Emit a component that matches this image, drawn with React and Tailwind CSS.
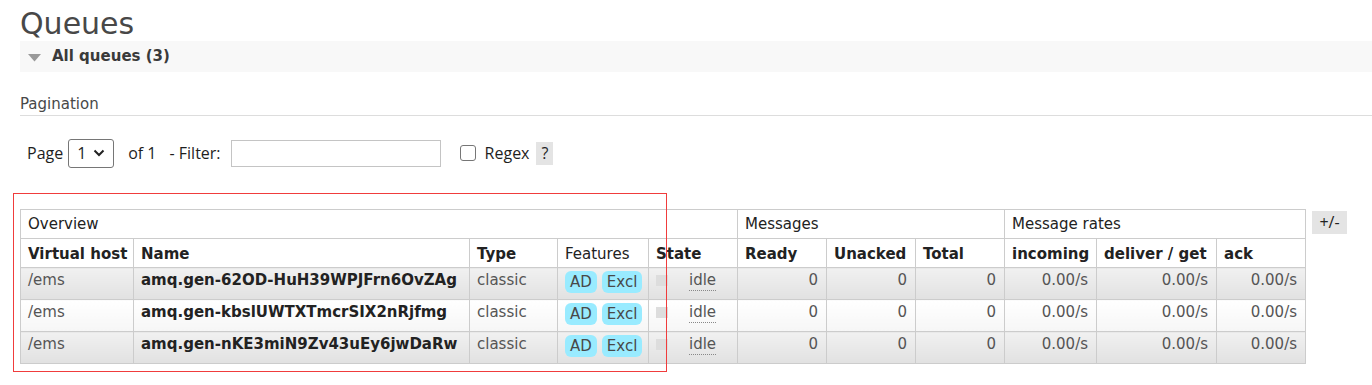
const rows = [
  { vhost: '/ems', name: 'amq.gen-62OD-HuH39WPJFrn6OvZAg' },
  { vhost: '/ems', name: 'amq.gen-kbslUWTXTmcrSIX2nRjfmg' },
  { vhost: '/ems', name: 'amq.gen-nKE3miN9Zv43uEy6jwDaRw' },
];

const widths = [113, 336, 88, 91, 89, 89, 89, 89, 92, 120, 89];

function Badge({ children }) {
  return (
    <span className="inline-block rounded-[6px] bg-[#99ebff] px-[5px] py-[1.5px] leading-[19px] text-[#484848]">
      {children}
    </span>
  );
}

export default function App() {
  const th = 'whitespace-nowrap border border-[#cccccc] px-[7px] pt-[6px] align-top text-left font-bold text-[#222]';
  const grp = 'whitespace-nowrap border border-[#cccccc] px-[7px] pt-[5px] align-top text-left font-normal text-[#222]';

  return (
    <div className="min-h-[385px] bg-white pl-[20px] font-['DejaVu_Sans',sans-serif] text-[15px] leading-[19px] text-[#484848]">
      {/* Title */}
      <h1 className="h-[41px] pt-[7px] text-[30px] leading-[34px] font-normal text-[#484848]">Queues</h1>

      {/* Section header */}
      <div className="flex h-[31px] items-center bg-[#f8f8f8] pl-[8px]">
        <svg width="13" height="8" viewBox="0 0 13 8" className="mt-[2px]">
          <path d="M0 0 L13 0 L6.5 7.5 Z" fill="#9a9a9a" />
        </svg>
        <span className="ml-[11px] text-[15px] font-bold text-[#3a3a3a]">All queues (3)</span>
      </div>

      {/* Pagination */}
      <div className="mt-[23px] border-b border-[#dddddd] pb-[1px] text-[#484848]">Pagination</div>

      <div className="mt-[22px] flex h-[30px] items-center pl-[7px] font-['Open_Sans',sans-serif] text-[16px] text-[#1e1e1e]">
        <span>Page</span>
        <div className="ml-[5px] flex h-[29px] w-[46px] items-center justify-between rounded-[3px] border border-[#767676] bg-white pl-[8px] pr-[8px]">
          <span>1</span>
          <svg width="12" height="8" viewBox="0 0 12 8">
            <path d="M1.5 1.5 L6 6 L10.5 1.5" fill="none" stroke="#222" strokeWidth="2" />
          </svg>
        </div>
        <span className="ml-[14px]">of 1</span>
        <span className="ml-[13px]">- Filter:</span>
        <div className="ml-[10px] h-[27px] w-[210px] border border-[#c4c4c4] bg-white" />
        <div className="ml-[19px] h-[16px] w-[16px] rounded-[3px] border border-[#767676] bg-white" />
        <span className="ml-[9px]">Regex</span>
        <span className="ml-[7px] flex h-[23px] w-[17px] items-center justify-center bg-[#e4e4e4]">?</span>
      </div>

      {/* Table */}
      <div className="mt-[41px] flex items-start">
        <div className="relative">
          <table className="table-fixed border-collapse" style={{ width: 1285 }}>
            <colgroup>
              {widths.map((w, i) => (
                <col key={i} style={{ width: w }} />
              ))}
            </colgroup>
            <thead>
              <tr className="h-[29px]">
                <th colSpan={5} className={grp}>Overview</th>
                <th colSpan={3} className={grp}>Messages</th>
                <th colSpan={3} className={grp}>Message rates</th>
              </tr>
              <tr className="h-[29px]">
                <th className={th}>Virtual host</th>
                <th className={th}>Name</th>
                <th className={th}>Type</th>
                <th className={th + ' !font-normal'}>Features</th>
                <th className={th}>State</th>
                <th className={th}>Ready</th>
                <th className={th}>Unacked</th>
                <th className={th}>Total</th>
                <th className={th}>incoming</th>
                <th className={th}>deliver / get</th>
                <th className={th}>ack</th>
              </tr>
            </thead>
            <tbody>
              {rows.map((r, i) => {
                const bg = i % 2 === 0
                  ? 'bg-linear-to-b from-[#f1f1f1] to-[#e1e1e1]'
                  : 'bg-linear-to-b from-[#ffffff] to-[#f6f6f6]';
                const td = `whitespace-nowrap border border-[#cccccc] px-[7px] pt-[3px] align-top text-[#555] ${bg}`;
                const num = `${td} text-right !pr-[8px]`;
                return (
                  <tr key={i} className="h-[32px]">
                    <td className={td}>{r.vhost}</td>
                    <td className={`${td} font-bold !text-[#222]`}>{r.name}</td>
                    <td className={td}>classic</td>
                    <td className={td}>
                      <div className="flex gap-[5px]">
                        <Badge>AD</Badge>
                        <Badge>Excl</Badge>
                      </div>
                    </td>
                    <td className={td}>
                      <div className="flex items-start">
                        <span className="mt-[4px] h-[11px] w-[12px] bg-[#dddddd]" />
                        <span className="ml-[21px] border-b border-dotted border-[#888]">idle</span>
                      </div>
                    </td>
                    <td className={num}>0</td>
                    <td className={num}>0</td>
                    <td className={num}>0</td>
                    <td className={num}>0.00/s</td>
                    <td className={num}>0.00/s</td>
                    <td className={num}>0.00/s</td>
                  </tr>
                );
              })}
            </tbody>
          </table>
          {/* annotation box */}
          <div className="pointer-events-none absolute left-[-7px] top-[-16px] h-[179px] w-[654px] border border-[#f03c3c]" />
        </div>
        <span className="ml-[6px] mt-[2px] flex h-[23px] w-[35px] items-center justify-center bg-[#e4e4e4] font-['Open_Sans',sans-serif] text-[16px] text-[#222]">
          +/-
        </span>
      </div>
    </div>
  );
}
